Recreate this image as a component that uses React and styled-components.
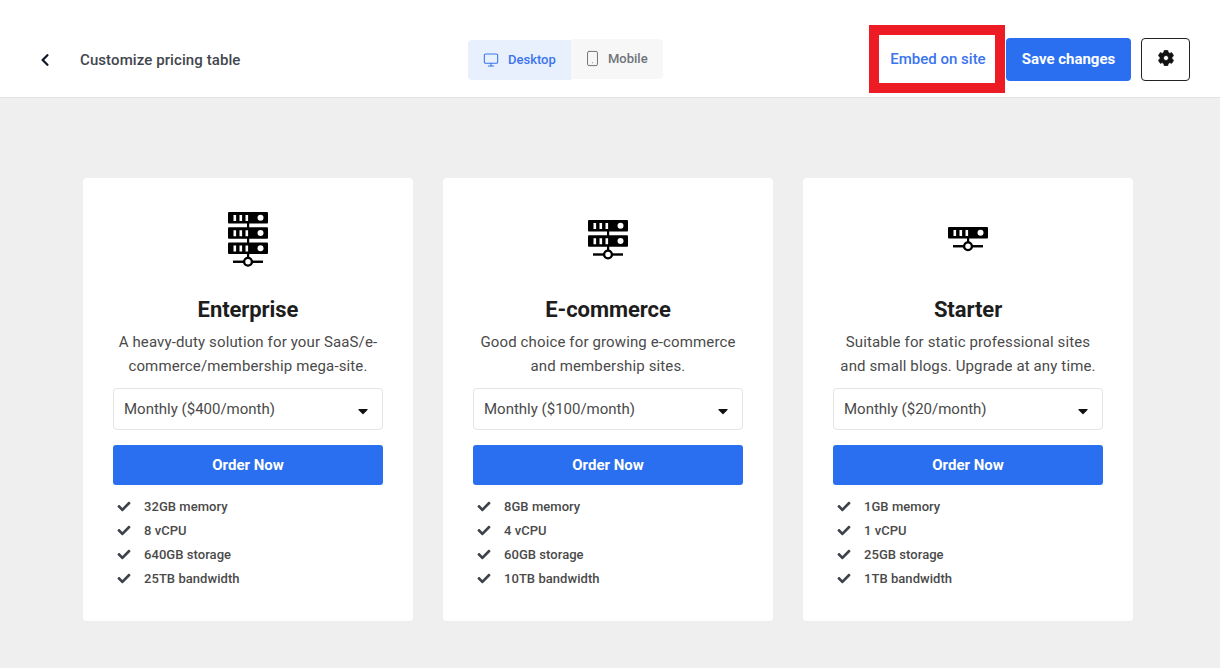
import React from "react";
import styled, { createGlobalStyle } from "styled-components";
import { FaCheck, FaChevronLeft, FaCog, FaCaretDown } from "react-icons/fa";
import { Monitor, Smartphone } from "lucide-react";

const plans = [
  {
    name: "Enterprise",
    racks: 3,
    desc: "A heavy-duty solution for your SaaS/e-commerce/membership mega-site.",
    price: "Monthly ($400/month)",
    features: ["32GB memory", "8 vCPU", "640GB storage", "25TB bandwidth"],
  },
  {
    name: "E-commerce",
    racks: 2,
    desc: "Good choice for growing e-commerce and membership sites.",
    price: "Monthly ($100/month)",
    features: ["8GB memory", "4 vCPU", "60GB storage", "10TB bandwidth"],
  },
  {
    name: "Starter",
    racks: 1,
    desc: "Suitable for static professional sites and small blogs. Upgrade at any time.",
    price: "Monthly ($20/month)",
    features: ["1GB memory", "1 vCPU", "25GB storage", "1TB bandwidth"],
  },
];

const ServerIcon = ({ racks }) => {
  const lineY = racks * 15.25 + 4;
  const height = lineY + 6;
  return (
    <svg width="40" height={height} viewBox={`0 0 40 ${height}`}>
      <rect x="19" y="4" width="2.2" height={lineY - 4} fill="#000" />
      {Array.from({ length: racks }).map((_, i) => (
        <g key={i} transform={`translate(0 ${i * 15.25})`}>
          <rect width="40" height="11.5" rx="1" fill="#000" />
          <rect x="5.5" y="3" width="2.6" height="6" fill="#fff" />
          <rect x="11.5" y="3" width="2.6" height="6" fill="#fff" />
          <rect x="17.5" y="3" width="2.6" height="6" fill="#fff" />
          <circle cx="32.5" cy="5.75" r="3" fill="#fff" />
        </g>
      ))}
      <rect x="5" y={lineY - 1.2} width="30" height="2.4" fill="#000" />
      <circle cx="20" cy={lineY} r="3.9" fill="#fff" stroke="#000" strokeWidth="2.4" />
    </svg>
  );
};

const App = () => (
  <Page>
    <GlobalStyle />
    <Header>
      <TitleGroup>
        <BackLink href="#">
          <FaChevronLeft size={14} />
        </BackLink>
        <Title>Customize pricing table</Title>
      </TitleGroup>
      <Toggle>
        <ToggleButton $active>
          <Monitor size={16} strokeWidth={1.6} />
          Desktop
        </ToggleButton>
        <ToggleButton>
          <Smartphone size={17} strokeWidth={1.4} />
          Mobile
        </ToggleButton>
      </Toggle>
      <Actions>
        <EmbedLink href="#">Embed on site</EmbedLink>
        <SaveButton>Save changes</SaveButton>
        <GearButton>
          <FaCog size={16} />
        </GearButton>
      </Actions>
    </Header>
    <Cards>
      {plans.map((plan) => (
        <Card key={plan.name}>
          <IconBox>
            <ServerIcon racks={plan.racks} />
          </IconBox>
          <PlanName>{plan.name}</PlanName>
          <PlanDesc>{plan.desc}</PlanDesc>
          <SelectWrap>
            <PriceSelect defaultValue={plan.price}>
              <option>{plan.price}</option>
            </PriceSelect>
            <Caret>
              <FaCaretDown size={16} />
            </Caret>
          </SelectWrap>
          <OrderButton>Order Now</OrderButton>
          <Features>
            {plan.features.map((f) => (
              <Feature key={f}>
                <FaCheck size={13} />
                {f}
              </Feature>
            ))}
          </Features>
        </Card>
      ))}
    </Cards>
  </Page>
);

const GlobalStyle = createGlobalStyle`
  body {
    margin: 0;
    font-family: Roboto, "Liberation Sans", sans-serif;
    background: #efefef;
  }
  * {
    box-sizing: border-box;
  }
`;

const Page = styled.div`
  height: 668px;
  overflow: hidden;
  background: #efefef;
`;

const Header = styled.header`
  display: grid;
  grid-template-columns: 468px 195px 1fr;
  align-items: center;
  height: 98px;
  padding: 20px 30px 0 0;
  background: #fff;
  border-bottom: 1px solid #e2e2e2;
`;

const TitleGroup = styled.div`
  display: flex;
  align-items: center;
  margin-top: 2px;
  padding-left: 38px;
`;

const BackLink = styled.a`
  display: flex;
  width: 42px;
  color: #10182b;
`;

const Title = styled.span`
  font-size: 15px;
  font-weight: 500;
  letter-spacing: 0.09px;
  color: #42464e;
`;

const Toggle = styled.div`
  display: flex;
  align-items: center;
  margin-top: 1px;
`;

const ToggleButton = styled.button`
  display: flex;
  align-items: center;
  gap: ${(p) => (p.$active ? "9px" : "7px")};
  width: ${(p) => (p.$active ? "103px" : "92px")};
  height: 40px;
  margin-top: ${(p) => (p.$active ? "1px" : "-1px")};
  padding: 0 0 0 ${(p) => (p.$active ? "15px" : "13px")};
  border: 0;
  border-radius: ${(p) => (p.$active ? "4px 0 0 4px" : "0 4px 4px 0")};
  font-family: inherit;
  font-size: 13px;
  font-weight: 500;
  color: ${(p) => (p.$active ? "#3b74ee" : "#70747a")};
  background: ${(p) => (p.$active ? "#e8f0fd" : "#f7f7f7")};
`;

const Actions = styled.div`
  display: flex;
  align-items: center;
  justify-content: flex-end;
`;

const EmbedLink = styled.a`
  display: flex;
  align-items: center;
  justify-content: center;
  width: 136px;
  height: 68px;
  margin-right: 1px;
  padding: 1px 0 0 2px;
  border: 10px solid #ed1c24;
  font-size: 15px;
  font-weight: 500;
  color: #3b74ee;
  text-decoration: none;
`;

const SaveButton = styled.button`
  width: 125px;
  height: 43px;
  margin-top: 1px;
  border: 0;
  border-radius: 4px;
  font-family: inherit;
  font-size: 15px;
  font-weight: 700;
  color: #fff;
  background: #2a6ff0;
`;

const GearButton = styled.button`
  display: flex;
  align-items: center;
  justify-content: center;
  width: 49px;
  height: 43px;
  margin: 1px 0 0 10px;
  padding: 0 0 3px;
  border: 1px solid #222;
  border-radius: 4px;
  color: #111;
  background: #fff;

  svg {
    stroke: currentColor;
    stroke-width: 24;
  }
`;

const Cards = styled.main`
  display: flex;
  justify-content: center;
  gap: 30px;
  padding: 80px 87px 0 83px;
`;

const Card = styled.section`
  display: flex;
  flex-direction: column;
  width: 330px;
  height: 443px;
  padding: 30px 30px 0;
  background: #fff;
  border-radius: 4px;
`;

const IconBox = styled.div`
  display: flex;
  align-items: center;
  justify-content: center;
  height: 64px;
`;

const PlanName = styled.h2`
  margin: 23px 0 0;
  font-size: 22px;
  font-weight: 700;
  letter-spacing: -0.07px;
  line-height: 30px;
  text-align: center;
  color: #1d1d1d;
`;

const PlanDesc = styled.p`
  height: 48px;
  margin: 5px 0 0;
  font-size: 15px;
  letter-spacing: 0.13px;
  line-height: 24px;
  text-align: center;
  color: #4a4a4a;
`;

const SelectWrap = styled.div`
  position: relative;
  margin-top: 10px;
`;

const PriceSelect = styled.select`
  display: block;
  width: 100%;
  height: 42px;
  padding: 0 10px 1px;
  border: 1px solid #e4e4e4;
  border-radius: 4px;
  appearance: none;
  font-family: inherit;
  font-size: 15px;
  color: #4a4a4a;
  background: #fff;
`;

const Caret = styled.span`
  position: absolute;
  top: 15px;
  right: 12px;
  display: flex;
  color: #111;
`;

const OrderButton = styled.button`
  width: 100%;
  height: 40px;
  margin-top: 15px;
  border: 0;
  border-radius: 3px;
  font-family: inherit;
  font-size: 15px;
  font-weight: 700;
  color: #fff;
  background: #2a6ff0;
`;

const Features = styled.ul`
  margin: 9px 0 0;
  padding: 0 0 0 4px;
  list-style: none;
`;

const Feature = styled.li`
  display: flex;
  align-items: center;
  gap: 13px;
  height: 24px;
  font-size: 13px;
  font-weight: 500;
  letter-spacing: 0.05px;
  color: #4a4a4a;

  svg {
    width: 14px;
    color: #3d4149;
  }
`;

export default App;
